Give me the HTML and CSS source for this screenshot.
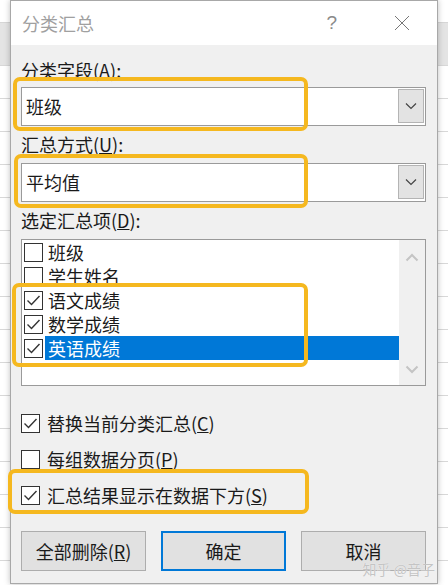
FILE: index.html
```html
<!DOCTYPE html>
<html lang="zh-CN">
<head>
  <meta charset="UTF-8" />
  <meta name="viewport" content="width=device-width, initial-scale=1.0"/>
  <title>分类汇总</title>
  <link rel="stylesheet" href="styles.css">
</head>
<body>
  <div class="dialog">
    <div class="titlebar">
      <span class="title">分类汇总</span>
      <span class="help">?</span>
      <span class="close">
        <svg width="16" height="16" viewBox="0 0 16 16"><path d="M1 1 L15 15 M15 1 L1 15" stroke="#777" stroke-width="1" fill="none"/></svg>
      </span>
    </div>

    <div class="content">
      <div class="label label-first">分类字段(<u>A</u>):</div>
      <div class="combo">
        <span class="value">班级</span>
        <span class="drop">
          <svg width="12" height="8" viewBox="0 0 12 8"><path d="M1 1.5 L6 6.5 L11 1.5" stroke="#444" stroke-width="1.2" fill="none"/></svg>
        </span>
      </div>

      <div class="label">汇总方式(<u>U</u>):</div>
      <div class="combo">
        <span class="value">平均值</span>
        <span class="drop">
          <svg width="12" height="8" viewBox="0 0 12 8"><path d="M1 1.5 L6 6.5 L11 1.5" stroke="#444" stroke-width="1.2" fill="none"/></svg>
        </span>
      </div>

      <div class="label">选定汇总项(<u>D</u>):</div>
      <div class="listbox">
        <ul class="items">
          <li class="item"><span class="check"></span><span class="text">班级</span></li>
          <li class="item"><span class="check"></span><span class="text">学生姓名</span></li>
          <li class="item"><span class="check on"></span><span class="text">语文成绩</span></li>
          <li class="item"><span class="check on"></span><span class="text">数学成绩</span></li>
          <li class="item selected"><span class="check on"></span><span class="text">英语成绩</span></li>
        </ul>
        <div class="scrollbar">
          <svg width="14" height="9" viewBox="0 0 14 9"><path d="M1.5 7.5 L7 2 L12.5 7.5" stroke="#c4c4c4" stroke-width="2" fill="none"/></svg>
          <svg width="14" height="9" viewBox="0 0 14 9"><path d="M1.5 1.5 L7 7 L12.5 1.5" stroke="#c4c4c4" stroke-width="2" fill="none"/></svg>
        </div>
      </div>

      <div class="options">
        <div class="option"><span class="check on"></span><span>替换当前分类汇总(<u>C</u>)</span></div>
        <div class="option"><span class="check"></span><span>每组数据分页(<u>P</u>)</span></div>
        <div class="option"><span class="check on"></span><span>汇总结果显示在数据下方(<u>S</u>)</span></div>
      </div>

      <div class="buttons">
        <button type="button">全部删除(<u>R</u>)</button>
        <button type="button" class="default">确定</button>
        <button type="button">取消</button>
      </div>
    </div>

    <div class="mark mark-field"></div>
    <div class="mark mark-method"></div>
    <div class="mark mark-items"></div>
    <div class="mark mark-below"></div>

    <div class="watermark">知乎 @音子</div>
  </div>
</body>
</html>
```

FILE: styles.css
```css
:root {
  --fundo: #f0f0f0;
  --borda: #9a9a9a;
  --botao: #e1e1e1;
  --botao-borda: #adadad;
  --azul: #0078d7;
  --amarelo: #f5b81f;
  --texto: #1a1a1a;
}

* {
  box-sizing: border-box;
}

body {
  margin: 0;
  height: 585px;
  overflow: hidden;
  font-family: "Noto Sans CJK SC", "Noto Sans", sans-serif;
  color: var(--texto);
  background:
    linear-gradient(#e4e4e4, #e4e4e4) 0 23px / 100% 42px no-repeat,
    linear-gradient(#d6d6d6, #d6d6d6) 0 22px / 100% 1px no-repeat,
    repeating-linear-gradient(to bottom, #fff 0 32px, #d8d8d8 32px 33px);
}

.dialog {
  position: relative;
  margin-left: 10px;
  width: 428px;
  height: 584px;
  background-color: var(--fundo);
  border: 1px solid #a8a8a8;
  box-shadow: 0 0 6px rgba(0, 0, 0, 0.25);
}

.titlebar {
  height: 44px;
  background-color: #fff;
  display: flex;
  align-items: center;
  padding-left: 11px;
}

.title {
  font-size: 18px;
  color: #a0a0a0;
  flex: 1;
}

.help {
  font-size: 19px;
  color: #8a8a8a;
  font-family: "Liberation Sans", sans-serif;
  margin-right: 57px;
}

.close {
  display: flex;
  margin-right: 27px;
}

.content {
  padding: 13px 11px 0 10px;
}

.label {
  font-size: 18px;
  line-height: 24px;
  margin-top: 6px;
  margin-bottom: 7px;
}

.label-first {
  margin-top: 0;
  margin-bottom: 5px;
}

.combo {
  height: 39px;
  background-color: #fff;
  border: 1px solid var(--borda);
  display: flex;
  align-items: stretch;
  padding: 1px 1px 2px 4px;
}

.combo .value {
  flex: 1;
  font-size: 18px;
  line-height: 34px;
}

.drop {
  width: 26px;
  background-color: #e3e3e3;
  border: 1px solid #b4b4b4;
  display: flex;
  align-items: center;
  justify-content: center;
}

.listbox {
  height: 147px;
  background-color: #fff;
  border: 1px solid var(--borda);
  display: flex;
}

.items {
  list-style: none;
  margin: 0;
  padding: 0 0 0 2px;
  flex: 1;
}

.item {
  height: 24px;
  display: flex;
  align-items: center;
  font-size: 18px;
}

.item .text {
  flex: 1;
  height: 24px;
  line-height: 24px;
  margin-left: 2px;
  padding-left: 3px;
}

.item.selected .text {
  background-color: var(--azul);
  color: #fff;
}

.check {
  width: 19px;
  height: 19px;
  border: 1px solid #333;
  background-color: #fff;
  flex-shrink: 0;
}

.check.on {
  background: #fff url("data:image/svg+xml,%3Csvg xmlns='http://www.w3.org/2000/svg' width='17' height='17' viewBox='0 0 17 17'%3E%3Cpath d='M2.5 8.5 L6.5 12.5 L14.5 4' stroke='%23333' stroke-width='1.4' fill='none'/%3E%3C/svg%3E") center / 17px 17px no-repeat;
}

.scrollbar {
  width: 26px;
  background-color: #f0f0f0;
  display: flex;
  flex-direction: column;
  justify-content: space-between;
  align-items: center;
  padding: 13px 0 11px;
}

.options {
  margin-top: 25px;
  display: flex;
  flex-direction: column;
  gap: 12px;
}

.option {
  height: 24px;
  display: flex;
  align-items: center;
  gap: 7px;
  font-size: 18px;
}

.buttons {
  margin-top: 24px;
  display: flex;
  justify-content: space-between;
}

button {
  width: 125px;
  height: 40px;
  background-color: var(--botao);
  border: 1px solid var(--botao-borda);
  font-family: inherit;
  font-size: 18px;
  color: var(--texto);
  padding: 0;
}

button.default {
  border: 2px solid var(--azul);
}

.mark {
  position: absolute;
  border: 4px solid var(--amarelo);
  border-radius: 7px;
  pointer-events: none;
}

.mark-field {
  left: 2px;
  top: 76px;
  width: 295px;
  height: 54px;
}

.mark-method {
  left: 3px;
  top: 153px;
  width: 294px;
  height: 54px;
}

.mark-items {
  left: 1px;
  top: 282px;
  width: 296px;
  height: 84px;
}

.mark-below {
  left: -3px;
  top: 468px;
  width: 301px;
  height: 45px;
}

.watermark {
  position: absolute;
  right: 2px;
  top: 560px;
  font-size: 14px;
  line-height: 16px;
  color: #c4c4c4;
  text-shadow: 0 0 1px #fff;
}
```
